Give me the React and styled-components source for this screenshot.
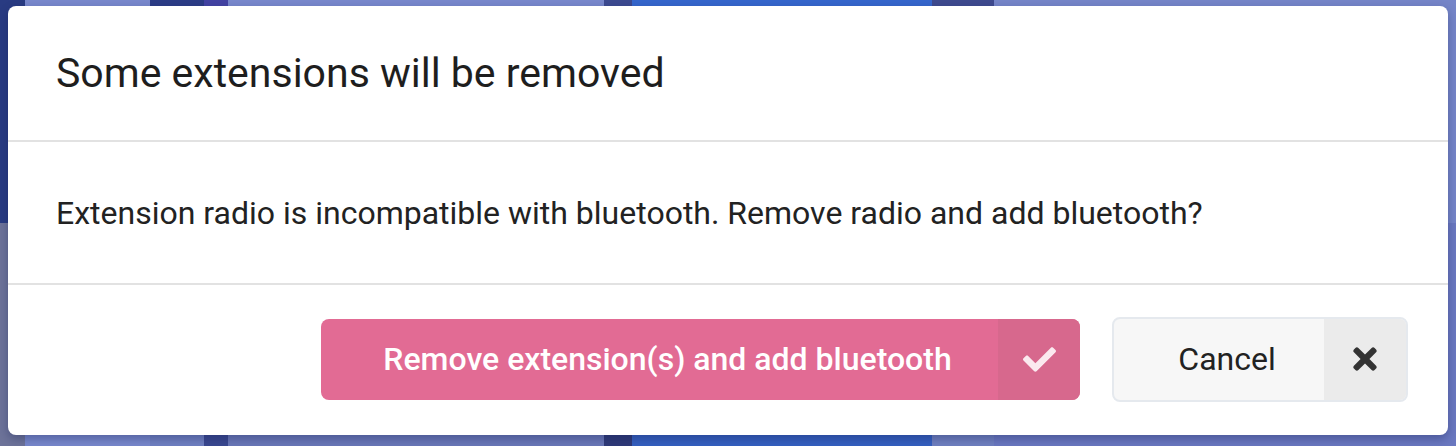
import React from 'react'
import styled, { createGlobalStyle } from 'styled-components'
import { FaCheck, FaTimes } from 'react-icons/fa'

const GlobalStyle = createGlobalStyle`
  html, body {
    margin: 0;
    padding: 0;
    width: 1456px;
    height: 446px;
    overflow: hidden;
    font-family: Roboto, "Liberation Sans", sans-serif;
  }
`

const Page = styled.div`
  position: relative;
  width: 1456px;
  height: 446px;
  overflow: hidden;
`

const Backdrop = styled.div`
  display: flex;
  height: 100%;
`

const Column = styled.div`
  flex: ${(p) => (p.$w ? `0 0 ${p.$w}px` : '1 1 auto')};
  background: linear-gradient(
    to bottom,
    ${(p) => p.$top} 0,
    ${(p) => p.$top} ${(p) => p.$split || 50}%,
    ${(p) => p.$bottom || p.$top} ${(p) => p.$split || 50}%,
    ${(p) => p.$bottom || p.$top} 100%
  );
`

const Modal = styled.div`
  position: absolute;
  left: 8px;
  top: 6px;
  width: 1440px;
  height: 429px;
  background: #fff;
  border-radius: 8px;
  box-shadow: 0 4px 10px rgba(20, 30, 80, 0.35);
  display: flex;
  flex-direction: column;
  overflow: hidden;
`

const Header = styled.div`
  height: 136px;
  display: flex;
  align-items: center;
  padding: 0 48px;
  border-bottom: 2px solid #e2e2e2;
  font-size: 41px;
  color: #1e1e1e;
  box-sizing: border-box;
`

const Content = styled.div`
  height: 143px;
  display: flex;
  align-items: center;
  padding: 0 48px;
  border-bottom: 2px solid #e2e2e2;
  font-size: 32px;
  color: #222;
  box-sizing: border-box;
`

const Actions = styled.div`
  flex: 1;
  display: flex;
  align-items: center;
  justify-content: flex-end;
  gap: 32px;
  padding: 0 40px 2px 0;
`

const Button = styled.button`
  display: flex;
  align-items: stretch;
  padding: 0;
  height: ${(p) => (p.$primary ? '81px' : '85px')};
  border-radius: 8px;
  overflow: hidden;
  font-family: inherit;
  font-size: 32px;
  font-weight: ${(p) => (p.$primary ? 500 : 400)};
  color: ${(p) => (p.$primary ? '#fff' : '#222')};
  background: ${(p) => (p.$primary ? '#e26b94' : '#f7f7f7')};
  border: ${(p) => (p.$primary ? 'none' : '2px solid #e5e9ee')};
  box-sizing: border-box;
  cursor: pointer;
`

const Label = styled.span`
  display: flex;
  align-items: center;
  justify-content: center;
  box-sizing: border-box;
  width: ${(p) => p.$w}px;
  padding-left: 16px;
`

const IconPart = styled.span`
  display: flex;
  align-items: center;
  justify-content: center;
  width: 82px;
  background: ${(p) => (p.$primary ? '#d7688d' : '#ebebeb')};
  color: ${(p) => (p.$primary ? '#fbe9ef' : '#333')};
  font-size: ${(p) => (p.$primary ? '33px' : '34px')};
`

export default function App() {
  return (
    <Page>
      <GlobalStyle />
      <Backdrop>
        <Column $w={25} $top="#293b82" $bottom="#6d7399" $split={50} />
        <Column $w={125} $top="#7888cc" />
        <Column $w={54} $top="#2c3c86" $bottom="#7080c2" $split={60} />
        <Column $w={24} $top="#4343a3" $bottom="#3a4890" />
        <Column $w={376} $top="#7888cc" $bottom="#6a78b8" />
        <Column $w={28} $top="#3c4a90" $bottom="#2f3a78" />
        <Column $w={300} $top="#3566cc" $bottom="#3560c0" />
        <Column $w={62} $top="#3e4a8e" $bottom="#7080c0" />
        <Column $top="#7585c8" $bottom="#6a78c0" />
      </Backdrop>
      <Modal>
        <Header>Some extensions will be removed</Header>
        <Content>
          Extension radio is incompatible with bluetooth. Remove radio and add
          bluetooth?
        </Content>
        <Actions>
          <Button $primary>
            <Label $w={677}>Remove extension(s) and add bluetooth</Label>
            <IconPart $primary>
              <FaCheck />
            </IconPart>
          </Button>
          <Button>
            <Label $w={210}>Cancel</Label>
            <IconPart>
              <FaTimes />
            </IconPart>
          </Button>
        </Actions>
      </Modal>
    </Page>
  )
}
